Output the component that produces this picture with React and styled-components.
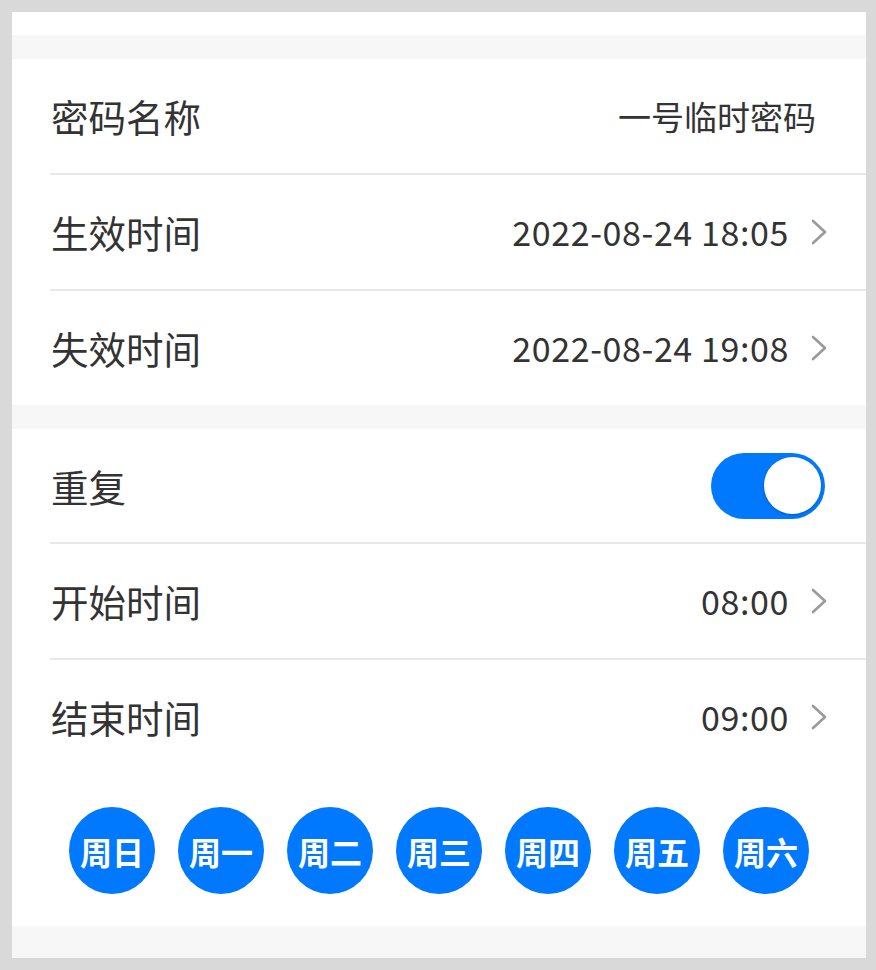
import React from "react";
import styled, { createGlobalStyle } from "styled-components";

const GlobalStyle = createGlobalStyle`
  html, body {
    margin: 0;
    padding: 0;
    background: #d9d9d9;
  }
  body {
    font-family: "Noto Sans CJK SC", "Noto Sans", sans-serif;
    color: #333333;
  }
`;

const Frame = styled.div`
  padding: 12px 10px 12px 12px;
`;

const Screen = styled.div`
  background: #f7f7f7;
  display: flex;
  flex-direction: column;
`;

const TopBar = styled.div`
  height: 23px;
  background: #ffffff;
`;

const Gap = styled.div`
  height: ${(p) => p.h || 24}px;
`;

const Section = styled.div`
  background: #ffffff;
  padding-left: 38px;
`;

const Row = styled.div`
  height: ${(p) => p.h || 114}px;
  display: flex;
  align-items: center;
  justify-content: space-between;
  border-bottom: ${(p) => (p.last ? "none" : "2px solid #e8e8e8")};
  padding-right: ${(p) => p.pr || 39}px;
`;

const Label = styled.span`
  font-size: 37.5px;
  line-height: 1;
  color: #333333;
  margin-left: 1px;
`;

const Value = styled.div`
  display: flex;
  align-items: center;
  gap: 22px;
  font-size: ${(p) => (p.num ? 34 : 33)}px;
  letter-spacing: ${(p) => (p.num ? 0.6 : 0)}px;
  line-height: 1;
  color: #333333;
`;

const Toggle = styled.div`
  width: 114px;
  height: 66px;
  border-radius: 33px;
  background: #0079fe;
  position: relative;
  margin-right: 2px;
`;

const Knob = styled.div`
  position: absolute;
  top: 4.5px;
  right: 4px;
  width: 57px;
  height: 57px;
  border-radius: 50%;
  background: #ffffff;
  box-shadow: 0 1px 3px rgba(0, 0, 0, 0.25);
`;

const Weekdays = styled.div`
  display: flex;
  justify-content: center;
  gap: 23px;
  padding: 33px 38px 32px 0;
`;

const Day = styled.div`
  width: 86px;
  height: 87px;
  border-radius: 50%;
  background: #0079fe;
  color: #ffffff;
  font-size: 32px;
  font-weight: 700;
  display: flex;
  align-items: center;
  justify-content: center;
`;

const Chevron = () => (
  <svg width="16" height="26" viewBox="0 0 16 26">
    <polyline
      points="2,2 14,13 2,24"
      fill="none"
      stroke="#9a9a9a"
      strokeWidth="2.6"
      strokeLinecap="round"
      strokeLinejoin="round"
    />
  </svg>
);

const days = ["周日", "周一", "周二", "周三", "周四", "周五", "周六"];

export default function App() {
  return (
    <Frame>
      <GlobalStyle />
      <Screen>
        <TopBar />
        <Gap />
        <Section>
          <Row pr={50}>
            <Label>密码名称</Label>
            <Value>一号临时密码</Value>
          </Row>
          <Row>
            <Label>生效时间</Label>
            <Value num>
              2022-08-24 18:05
              <Chevron />
            </Value>
          </Row>
          <Row last>
            <Label>失效时间</Label>
            <Value num>
              2022-08-24 19:08
              <Chevron />
            </Value>
          </Row>
        </Section>
        <Gap />
        <Section>
          <Row h={113}>
            <Label>重复</Label>
            <Toggle>
              <Knob />
            </Toggle>
          </Row>
          <Row>
            <Label>开始时间</Label>
            <Value num>
              08:00
              <Chevron />
            </Value>
          </Row>
          <Row last>
            <Label>结束时间</Label>
            <Value num>
              09:00
              <Chevron />
            </Value>
          </Row>
          <Weekdays>
            {days.map((d) => (
              <Day key={d}>{d}</Day>
            ))}
          </Weekdays>
        </Section>
        <Gap h={32} />
      </Screen>
    </Frame>
  );
}
